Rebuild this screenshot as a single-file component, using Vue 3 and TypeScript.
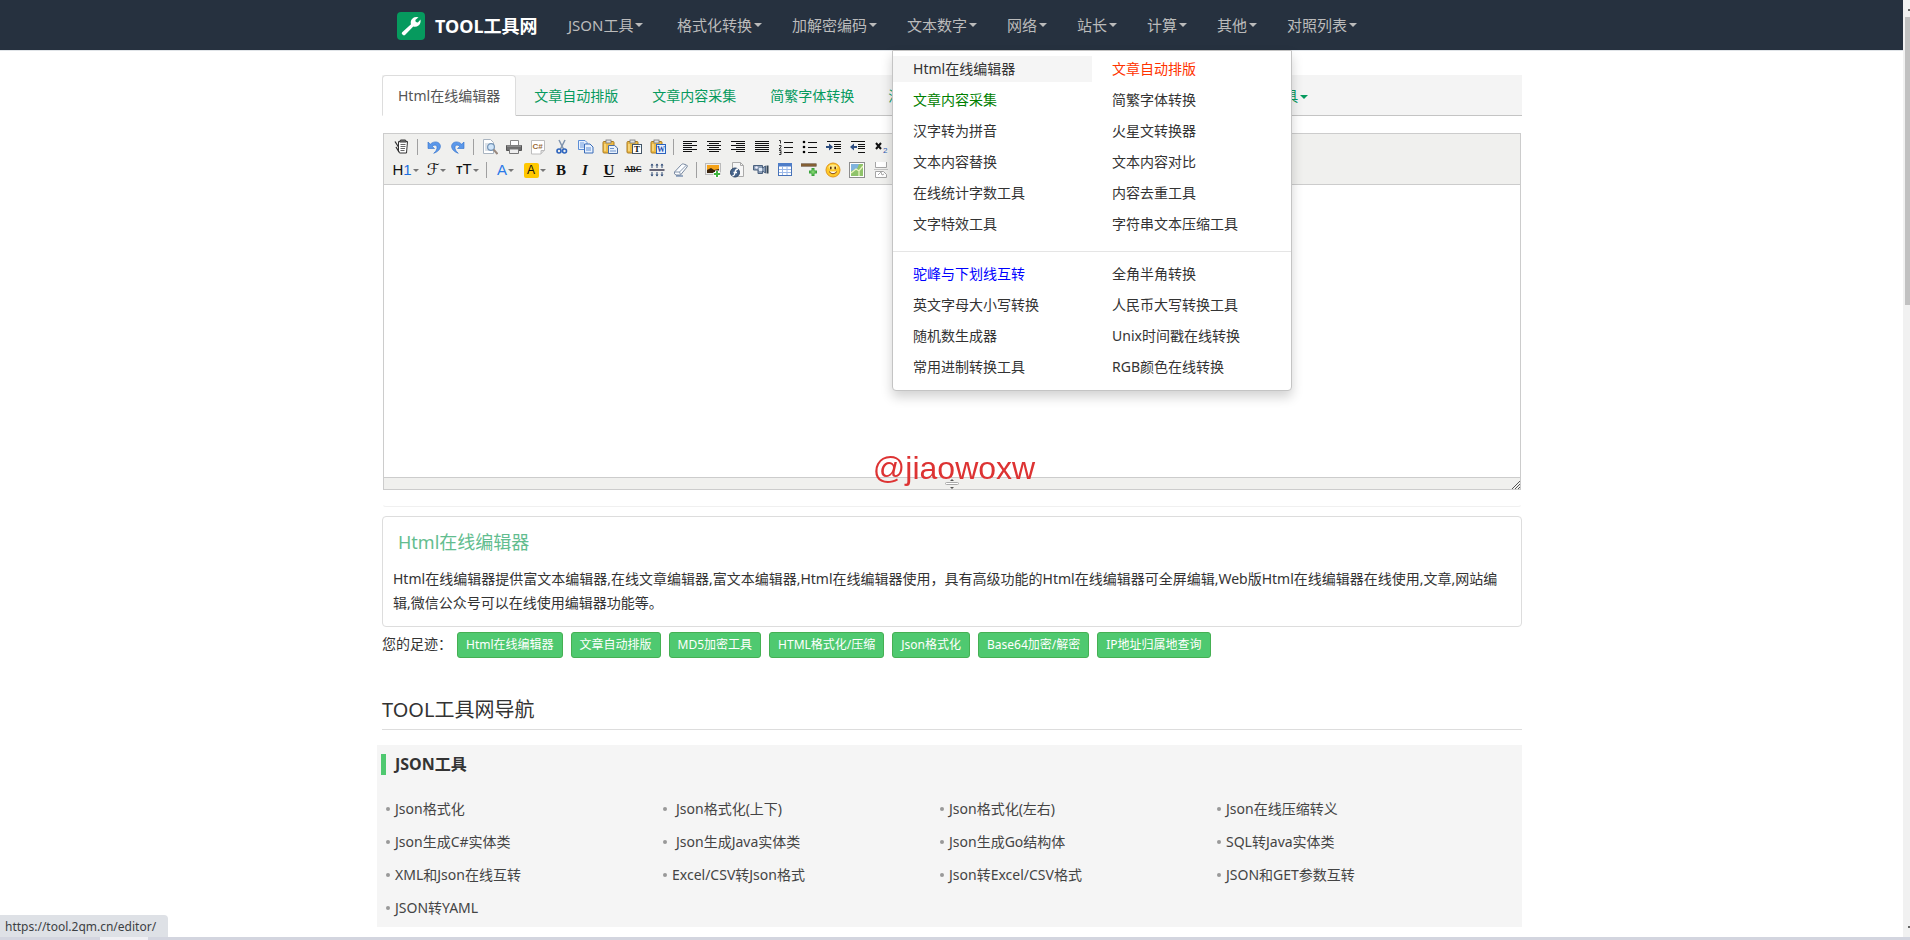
<script setup lang="ts">
import { ref } from 'vue'

interface MenuItem { label: string; tone?: string }
interface Tool { kind: 'icon' | 'text' | 'sep'; name: string; art?: string; text?: string; drop?: boolean; wide?: boolean }

const navItems = ['JSON工具', '格式化转换', '加解密编码', '文本数字', '网络', '站长', '计算', '其他', '对照列表']
const openItem = '文本数字'

const menuGroups: MenuItem[][] = [
  [
    { label: 'Html在线编辑器', tone: 'hover' }, { label: '文章自动排版', tone: 'red' },
    { label: '文章内容采集', tone: 'green' }, { label: '简繁字体转换' },
    { label: '汉字转为拼音' }, { label: '火星文转换器' },
    { label: '文本内容替换' }, { label: '文本内容对比' },
    { label: '在线统计字数工具' }, { label: '内容去重工具' },
    { label: '文字特效工具' }, { label: '字符串文本压缩工具' },
  ],
  [
    { label: '驼峰与下划线互转', tone: 'blue' }, { label: '全角半角转换' },
    { label: '英文字母大小写转换' }, { label: '人民币大写转换工具' },
    { label: '随机数生成器' }, { label: 'Unix时间戳在线转换' },
    { label: '常用进制转换工具' }, { label: 'RGB颜色在线转换' },
  ],
]

const tabs = ['文章自动排版', '文章内容采集', '简繁字体转换', '汉字转为拼音', '火星文转换器', '文本内容替换']

const icon = (name: string, art: string): Tool => ({ kind: 'icon', name, art })
const sep = (name: string): Tool => ({ kind: 'sep', name })
const bars = (rows: number[][]) =>
  rows.map(([x, w], i) => `<rect x="${x}" y="${2 + i * 2}" width="${w}" height="1" fill="#111"/>`).join('')
const clipboard =
  '<rect x="1" y="2.500" width="11" height="11.500" rx="1" fill="#eebb45" stroke="#a97a22"/><path d="M3 5v7" stroke="#f9dc8c" stroke-width="1.500"/><rect x="4" y="1" width="5" height="3" fill="#e2e2e2" stroke="#777" stroke-width=".8"/>'
const undo =
  '<path d="M2 3v6.500h6.500L6.300 7.400C8 5.600 10.600 5.700 11 8c.2 2.300-1 4.300-3.300 6.300C12 12.800 14.600 10 14.400 6.800 13.800 2.800 8.500 1.200 4.300 5.200z" fill="#5b98ea" stroke="#2f6fcb" stroke-width=".6"/>'

const rowOne: Tool[] = [
  icon('HTML代码', '<path d="M4.500 2.500h9l-1 11.500h-7l-1-2z" fill="#fff" stroke="#333"/><path d="M6.500 1h5l1 2h-7z" fill="#888" stroke="#333"/><path d="M6.500 5.500h5M6.500 7.500h5M6.500 9.500h4.500M6.500 11.500h4" stroke="#666"/><path d="M1 2.500l3.500 5.500M2 8l3 5" stroke="#333" stroke-width="1.300"/>'),
  sep('s1'),
  icon('后退', undo),
  icon('前进', `<g transform="matrix(-1 0 0 1 16 0)">${undo}</g>`),
  sep('s2'),
  icon('预览', '<path d="M1.500 .5h7l3 3v11h-10z" fill="#fff" stroke="#a9b4c0"/><path d="M3 5h5M3 7h3M3 9h3M3 11h4" stroke="#b8c4d0"/><circle cx="9" cy="8" r="3.400" fill="#cfe5fa" stroke="#7393b5" stroke-width="1.200"/><path d="M11.500 10.500L15.500 15" stroke="#9a8a80" stroke-width="2"/>'),
  icon('打印', '<path d="M4.500 1.500h8v5h-8z" fill="#fff" stroke="#888"/><path d="M.5 6.500h15v5h-15z" fill="#6d6d6d" stroke="#555"/><path d="M3.500 10h9v4.500h-9z" fill="#eee" stroke="#777"/><path d="M1 7h14" stroke="#aaa"/>'),
  icon('插入程序代码', '<path d="M1.500 1.500h13v10l-3.500 3.500h-9.500z" fill="#fff" stroke="#bcbcbc"/><path d="M14.500 11.500H11V15" fill="#ddd" stroke="#bbb"/><text x="2.500" y="10" font-size="8" font-weight="700" font-family="Liberation Sans,sans-serif" fill="#9b6a36">C#</text>'),
  icon('剪切', '<path d="M5 1l4.500 9M11 1L6.500 10" stroke="#7f93ad" stroke-width="1.500"/><circle cx="5" cy="12" r="2" fill="none" stroke="#2c63bd" stroke-width="1.600"/><circle cx="10.500" cy="12" r="2" fill="none" stroke="#2c63bd" stroke-width="1.600"/>'),
  icon('复制', '<path d="M.5 1.500h6.500l2 2v7h-8.500z" fill="#e8f1fd" stroke="#5c8ed6"/><path d="M2 4h4M2 6h4M2 8h4" stroke="#6d9be0"/><path d="M6.500 5h5.500l3 3v6h-8.500z" fill="#e8f1fd" stroke="#3a6cb8"/><path d="M8 9h5M8 11h5" stroke="#5c8ed6"/>'),
  icon('粘贴', clipboard + '<path d="M6.500 6.500h6l3 2.500v5.500h-9z" fill="#e8f1fd" stroke="#4a6ea5"/><path d="M8 9.500h4M8 12h6" stroke="#6d93cc"/>'),
  icon('粘贴为无格式文本', clipboard + '<rect x="6.500" y="5.500" width="9" height="9" fill="#fff" stroke="#456"/><text x="8" y="13" font-size="9" font-weight="700" font-family="Liberation Serif,serif" fill="#111">T</text>'),
  icon('从Word粘贴', clipboard + '<rect x="6.500" y="5.500" width="9" height="9" fill="#eaf2fe" stroke="#2c63bd"/><text x="7" y="13" font-size="8" font-weight="700" font-family="Liberation Serif,serif" fill="#1c50b0">W</text>'),
  sep('s3'),
  icon('左对齐', bars([[1, 14], [1, 9], [1, 14], [1, 9], [1, 14], [1, 9]])),
  icon('居中', bars([[1, 14], [3, 10], [1, 14], [3, 10], [1, 14], [3, 10]])),
  icon('右对齐', bars([[1, 14], [6, 9], [1, 14], [6, 9], [1, 14], [6, 9]])),
  icon('两端对齐', bars([[1, 14], [1, 14], [1, 14], [1, 14], [1, 14], [1, 14]])),
  icon('编号', '<path d="M6 3.500h9M6 8.500h9M6 13.500h9" stroke="#111"/><path d="M1 1.500h1.500v3M1 6.500h2v1.500l-2 2h2.500M1 11.500h2v4H1M1.500 13.500H3" fill="none" stroke="#222" stroke-width=".9"/>'),
  icon('项目符号', '<path d="M6 3.500h9M6 8.500h9M6 13.500h9" stroke="#111"/><circle cx="2" cy="3" r="1.300"/><circle cx="2" cy="8" r="1.300"/><circle cx="2" cy="13" r="1.300"/>'),
  icon('增加缩进', '<path d="M1 2.500h14M8 5.500h7M8 7.500h7M8 9.500h7M8 13.500h7" stroke="#111"/><path d="M0 7h3V4.500L7 8l-4 3.500V9H0z" fill="#2d4d80"/>'),
  icon('减少缩进', '<path d="M1 2.500h14M8 5.500h7M8 7.500h7M8 9.500h7M8 13.500h7" stroke="#111"/><path d="M7 7H4V4.500L0 8l4 3.500V9h3z" fill="#2d4d80"/>'),
  icon('下标', '<path d="M2 4l5 6M7 4l-5 6" stroke="#111" stroke-width="2"/><text x="9" y="14" font-size="8" font-family="Liberation Sans,sans-serif" fill="#2d5db0">2</text>'),
]

const rowTwo: Tool[] = [
  { kind: 'text', name: 'heading', text: 'H', drop: true, wide: true },
  { kind: 'text', name: 'family', text: 'ℱ', drop: true, wide: true },
  { kind: 'text', name: 'size', text: 'T', drop: true, wide: true },
  sep('s4'),
  { kind: 'text', name: 'forecolor', text: 'A', drop: true },
  { kind: 'text', name: 'backcolor', text: 'A', drop: true },
  { kind: 'text', name: 'bold', text: 'B' },
  { kind: 'text', name: 'italic', text: 'I' },
  { kind: 'text', name: 'underline', text: 'U' },
  { kind: 'text', name: 'strike', text: 'ABC' },
  icon('行距', '<path d="M0.500 7h15v2h-15z" fill="#667"/><path d="M3 6V2M8 6V2M13 6V2M3 10v4M8 10v4M13 10v4" stroke="#35507a"/><path d="M1.500 3.500h3L3 1.500zM6.500 3.500h3L8 1.500zM11.500 3.500h3L13 1.500zM1.500 12.500h3L3 14.500zM6.500 12.500h3L8 14.500zM11.500 12.500h3L13 14.500z" fill="#35507a"/>'),
  icon('删除格式', '<path d="M1.500 10L8.500 2.500q.8-.8 2-.5l3 1q1.500.8.500 2L7.500 13H3q-2.300-.8-1.500-3z" fill="#fbfdff" stroke="#7888a0"/><path d="M1.500 10h5l7-7M6.500 10l1 2.500" fill="none" stroke="#8797ad"/><path d="M3 14h7" stroke="#456797"/>'),
  sep('s5'),
  icon('图片', '<rect x=".5" y="1.500" width="15" height="11" fill="#eee" stroke="#bbb"/><rect x="2" y="3" width="12" height="8" fill="#f5a31a"/><path d="M2 8l4-2 3 2 5-1v4H2z" fill="#3a240e"/><path d="M12 8.500v7M8.500 12h7" stroke="#fff" stroke-width="4"/><path d="M12 9v6M9 12h6" stroke="#3eb53e" stroke-width="2"/>'),
  icon('Flash', '<path d="M3.500 .5h8l3 3v11h-11z" fill="#f6f6f6" stroke="#aaa"/><path d="M11.500 .5v3h3" fill="none" stroke="#aaa"/><circle cx="6" cy="10.500" r="4.500" fill="#47658c" stroke="#2e4666"/><path d="M9 7q-2.500 0-3 3.500T3.300 14M4.500 10.500H8" fill="none" stroke="#fff" stroke-width="1.300"/>'),
  icon('视音频', '<path d="M.5 3.500h9v2.500l3-2v7l-3-2v2.500H5V8H.5z" fill="#8a9db5" stroke="#4b617f"/><circle cx="3.500" cy="5.500" r="1.300" fill="#eef"/><rect x="6" y="6" width="3" height="3" fill="#dde8f6"/><path d="M14.500 3.500v8" stroke="#345" stroke-width="2"/>'),
  icon('表格', '<rect x="1.500" y="1.500" width="13" height="12" fill="#fff" stroke="#4772b8"/><path d="M1 1h14v3.500H1z" fill="#4e7dc8"/><path d="M5.500 4.500V13M10 4.500V13M2 7.500h12M2 10.500h12" stroke="#9ab8e8"/>'),
  icon('横线', '<path d="M0 3h15.500" stroke="#43250a" stroke-width="3"/><path d="M0 3h15" stroke="#c59a5c"/><path d="M12 6v8M8 10h8" stroke="#39a33a" stroke-width="3"/><path d="M12 7.500v5M9.500 10h5" stroke="#93e07a"/>'),
  icon('表情', '<circle cx="8" cy="8" r="7" fill="#ffc928" stroke="#df961d"/><ellipse cx="8" cy="5" rx="4.500" ry="2.500" fill="#ffe98a"/><ellipse cx="5.800" cy="6" rx=".9" ry="1.400" fill="#5a3210"/><ellipse cx="10.200" cy="6" rx=".9" ry="1.400" fill="#5a3210"/><path d="M4 9.500q4 4.500 8 0" fill="#fff" stroke="#8a4c10"/>'),
  icon('地图', '<rect x=".5" y=".5" width="15" height="15" fill="#fff" stroke="#8d8d8d"/><rect x="2" y="2" width="12" height="12" fill="#8fc36a"/><path d="M2 2h8L8 7l-6 2z" fill="#7fb3dd"/><path d="M2 11l5-4 3 2 4-5M10 9v5" fill="none" stroke="#e9f3c0" stroke-width="1.300"/>'),
  icon('分页符', '<path d="M2.500 0v5.500h11V0M2.500 15.500v-6h8l3 3v3z" fill="#fff" stroke="#a5a5a5"/><path d="M1 7.500h14" stroke="#c3c3c3"/><path d="M5 13l3-3 1 3 2-1" fill="none" stroke="#aaa"/>'),
]

const footprints = ['Html在线编辑器', '文章自动排版', 'MD5加密工具', 'HTML格式化/压缩', 'Json格式化', 'Base64加密/解密', 'IP地址归属地查询']

const jsonTools: { label: string; spaced?: boolean }[] = [
  { label: 'Json格式化' }, { label: 'Json格式化(上下)', spaced: true }, { label: 'Json格式化(左右)' }, { label: 'Json在线压缩转义' },
  { label: 'Json生成C#实体类' }, { label: 'Json生成Java实体类', spaced: true }, { label: 'Json生成Go结构体' }, { label: 'SQL转Java实体类' },
  { label: 'XML和Json在线互转' }, { label: 'Excel/CSV转Json格式' }, { label: 'Json转Excel/CSV格式' }, { label: 'JSON和GET参数互转' },
  { label: 'JSON转YAML' },
]

const content = ref('')
</script>

<template>
  <div class="page">
    <header class="topbar">
      <nav class="container topnav">
        <a class="brand" href="#">
          <svg class="logo" viewBox="0 0 28 28" aria-hidden="true">
            <rect width="28" height="28" rx="4" fill="#069a5e" />
            <path d="M5.200 20.300L14 12.200C13.200 9.500 14.500 6.400 17.500 5.300q2-.8 4 0l-3.200 2.700 .5 2 2.100.4 2.600-3q.6 4-2 6.200-2.300 1.800-5.200 1L8 23q-1 .8-2 0l-1-.9q-.7-.9.200-1.800z" fill="#fff" />
          </svg>
          <span>TOOL工具网</span>
        </a>
        <ul class="nav">
          <li v-for="item in navItems" :key="item" class="nav-item">
            <a class="nav-link" href="#">{{ item }}<i class="caret"></i></a>
            <div v-if="item === openItem" class="menu">
              <ul v-for="(group, g) in menuGroups" :key="g" class="menu-group">
                <li v-for="entry in group" :key="entry.label">
                  <a href="#" :class="['menu-link', entry.tone]">{{ entry.label }}</a>
                </li>
              </ul>
            </div>
          </li>
        </ul>
      </nav>
    </header>

    <main class="container">
      <ul class="tabs">
        <li><a class="tab active" href="#">Html在线编辑器</a></li>
        <li v-for="tab in tabs" :key="tab"><a class="tab" href="#">{{ tab }}</a></li>
        <li><a class="tab" href="#">更多工具<i class="caret"></i></a></li>
      </ul>

      <section class="editor-wrap">
        <div class="editor">
          <div class="toolbar">
            <div v-for="(row, r) in [rowOne, rowTwo]" :key="r" class="tool-row">
              <template v-for="tool in row" :key="tool.name">
                <span v-if="tool.kind === 'sep'" class="sep"></span>
                <button v-else type="button" :class="['tool', { drop: tool.drop, wide: tool.wide }]" :aria-label="tool.name">
                  <svg v-if="tool.kind === 'icon'" viewBox="0 0 16 16" class="tool-icon" v-html="tool.art"></svg>
                  <span v-else :class="['glyph', tool.name]"><small v-if="tool.name === 'size'">T</small>{{ tool.text }}<b v-if="tool.name === 'heading'">1</b></span>
                  <i v-if="tool.drop" class="arrow"></i>
                </button>
              </template>
            </div>
          </div>
          <textarea v-model="content" class="editor-body" aria-label="编辑区"></textarea>
          <div class="statusbar">
            <svg class="grip" viewBox="0 0 14 10" aria-hidden="true">
              <path d="M7 0l2 2H5zM7 10l2-2H5z" fill="#555" />
              <rect x=".5" y="3.500" width="13" height="2" rx="1" fill="#fff" stroke="#aaa" />
            </svg>
            <svg class="corner" viewBox="0 0 8 8" aria-hidden="true">
              <path d="M0 8L8 0M3 8l5-5M6 8l2-2" stroke="#555" />
            </svg>
          </div>
        </div>
      </section>

      <section class="intro">
        <h1>Html在线编辑器</h1>
        <p>Html在线编辑器提供富文本编辑器,在线文章编辑器,富文本编辑器,Html在线编辑器使用，具有高级功能的Html在线编辑器可全屏编辑,Web版Html在线编辑器在线使用,文章,网站编辑,微信公众号可以在线使用编辑器功能等。</p>
      </section>

      <div class="footprints">
        <span class="foot-label">您的足迹：</span>
        <a v-for="item in footprints" :key="item" class="chip" href="#">{{ item }}</a>
      </div>

      <h2 class="nav-title">TOOL工具网导航</h2>
      <section class="group">
        <h3>JSON工具</h3>
        <ul class="links">
          <li v-for="tool in jsonTools" :key="tool.label">
            <a href="#" :class="{ spaced: tool.spaced }">{{ tool.label }}</a>
          </li>
        </ul>
      </section>
    </main>

    <div class="watermark">@jiaowoxw</div>
    <div class="scrollbar" aria-hidden="true"><span class="up"></span><span class="thumb"></span><span class="down"></span></div>
    <div class="url-hint">https://tool.2qm.cn/editor/</div>
    <div class="strip" aria-hidden="true"><span></span></div>
  </div>
</template>

<style>
html, body { margin: 0; background: #fff; overflow: hidden; }
</style>

<style scoped>
.page {
  box-sizing: border-box;
  min-height: 100vh;
  padding-right: 6px;
  font: 14px/20px "Noto Sans", "Noto Sans CJK SC", sans-serif;
  color: #333;
}
.page * { box-sizing: border-box; }
a { text-decoration: none; color: inherit; }
ul { list-style: none; margin: 0; padding: 0; }
.container { max-width: 1140px; margin: 0 auto; }

.topbar { background: #26313f; border-bottom: 1px solid #e0e4e8; }
.topnav { display: flex; height: 50px; }
.brand {
  display: flex; align-items: center; gap: 10px; min-width: 171px; padding: 2px 0 0 15px;
  color: #fff; font-size: 18px; font-weight: 700; white-space: nowrap;
}
.logo { width: 28px; height: 28px; flex: none; }
.nav { display: flex; }
.nav-item { position: relative; flex: none; }
.nav-item:first-child { min-width: 109px; }
.nav-link { display: flex; align-items: center; height: 50px; padding: 0 15px; font-size: 15px; color: #bbb; white-space: nowrap; }
.caret {
  display: inline-block; margin-left: 2px; vertical-align: middle;
  border: 4px solid transparent; border-top-color: currentColor; border-bottom-width: 0;
}

.menu {
  position: absolute; top: 50px; left: 0; z-index: 10; width: 400px; padding: 5px 0;
  background: #fff; border: 1px solid #c4c4c4; border-radius: 0 0 4px 4px;
  box-shadow: 0 6px 12px rgba(0, 0, 0, 0.18);
}
.menu-group { display: grid; grid-template-columns: 1fr 1fr; row-gap: 5px; padding-bottom: 5px; }
.menu-group + .menu-group { margin-top: 9px; padding-top: 9px; border-top: 1px solid #e5e5e5; }
.menu-link { display: block; padding: 3px 20px; white-space: nowrap; }
.menu-link.hover { background: #f5f5f5; }
.menu-link.red { color: #ff3300; }
.menu-link.green { color: #008000; }
.menu-link.blue { color: #0000ff; }

.tabs { display: flex; gap: 2px; margin-top: 24px; background: #f4f4f4; border-bottom: 1px solid #c4c4c4; height: 41px; }
.tab { display: block; height: 40px; padding: 10px 15px; border: 1px solid transparent; color: #069a5e; white-space: nowrap; }
.tab.active { height: 41px; background: #fff; border-color: #ddd; border-bottom-color: #fff; border-radius: 4px 4px 0 0; color: #555; }

.editor-wrap { padding: 17px 0 16px; border: 1px solid transparent; border-top: 0; border-bottom-color: #f0f0f0; border-radius: 4px; }
.editor { border: 1px solid #ccc; }
.toolbar { display: flex; flex-direction: column; gap: 1px; padding: 2px 6px 3px; background: #f0f0ee; border-bottom: 1px solid #ccc; }
.tool-row { display: flex; height: 22px; }
.tool {
  display: flex; align-items: center; justify-content: center; flex: none;
  width: 24px; padding: 0; border: 0; background: none; color: #111; font: 15px/16px "Liberation Sans", sans-serif;
}
.tool.drop { width: 29px; gap: 1px; }
.tool.wide { width: 31px; }
.tool-icon { width: 16px; height: 16px; }
.sep { width: 8px; flex: none; background: linear-gradient(#a0a0a0, #a0a0a0) 3px 50% / 1px 16px no-repeat; }
.arrow { border: 3px solid transparent; border-top-color: #777; border-bottom-width: 0; }
.glyph b { color: #1d6fe0; font-weight: 400; }
.glyph small { font-size: 10px; font-weight: 700; }
.family { font: 16px/16px "DejaVu Sans", "DejaVu Serif", serif; }
.forecolor { color: #2a7ae8; }
.backcolor { width: 15px; background: #ffc800; border-radius: 2px; font-size: 12px; line-height: 15px; }
.bold, .italic, .underline { font: 700 15px/16px "Liberation Serif", serif; }
.italic { font-style: italic; }
.underline { text-decoration: underline; }
.strike { font: 700 8px/16px "Liberation Serif", serif; text-decoration: line-through; }
.editor-body { display: block; width: 100%; height: 292px; padding: 5px; border: 0; outline: 0; resize: none; background: #fff; font: inherit; }
.statusbar {
  display: grid; grid-template-columns: 1fr auto 1fr; align-items: end;
  height: 12px; background: #f0f0ee; border-top: 1px solid #ccc;
}
.grip { grid-column: 2; width: 14px; height: 10px; }
.corner { justify-self: end; width: 8px; height: 8px; }

.intro { margin-top: 9px; padding: 13px 10px 11px; border: 1px solid #ddd; border-radius: 4px; }
.intro h1 { margin: 0 0 13px; padding-left: 5px; font-size: 18px; line-height: 24px; font-weight: 400; color: #62bd8f; }
.intro p { margin: 0; line-height: 24px; }

.footprints { display: flex; gap: 8px; margin-top: 5px; }
.foot-label { width: 67px; line-height: 24px; white-space: nowrap; }
.chip {
  padding: 3px 8px; border: 1px solid #45b053; border-radius: 3px; background: #4fc970;
  color: #fff; font-size: 12px; line-height: 18px; white-space: nowrap;
}

.nav-title { margin: 37px 0 0; padding-bottom: 4px; border-bottom: 1px solid #ddd; font-size: 20px; line-height: 30px; font-weight: 400; }
.group { margin: 15px 0 0 -5px; padding: 9px 0 3px 4px; background: #f5f5f5; }
.group h3 { margin: 0; padding-left: 9px; border-left: 5px solid #4fc970; font-size: 16px; line-height: 21px; }
.links { display: grid; grid-template-columns: repeat(4, 277px); margin-top: 17px; padding-left: 5px; }
.links li { display: flex; align-items: center; gap: 5px; line-height: 33px; color: #444; white-space: nowrap; }
.links li::before { content: ""; width: 4px; height: 4px; border-radius: 50%; background: #999; }
.links .spaced { padding-left: 4px; }

.watermark {
  position: absolute; top: 448px; left: 0; right: 2px; z-index: 5; text-align: center;
  font: 32px/40px "Liberation Sans", sans-serif; color: #dd3333; pointer-events: none;
}
.scrollbar { position: fixed; top: 0; right: 0; bottom: 0; width: 7px; padding: 17px 0 0 2px; background: #f1f1f1; }
.thumb { display: block; height: 288px; background: #c1c1c1; }
.up, .down { position: absolute; right: 0; width: 2px; height: 2px; background: #666; }
.up { top: 9px; }
.down { bottom: 12px; }
.url-hint {
  position: fixed; left: 0; bottom: 3px; z-index: 20; width: 168px; padding: 2px 0 0 5px;
  background: #dee1e6; border-radius: 0 4px 0 0; color: #3c4043; font-size: 12px; line-height: 20px; white-space: nowrap;
}
.strip { position: fixed; left: 0; right: 0; bottom: 0; z-index: 20; height: 3px; background: #d3d5df; }
.strip span { display: block; width: 48px; height: 3px; margin-left: 100px; background: #f0f0f4; }
</style>
